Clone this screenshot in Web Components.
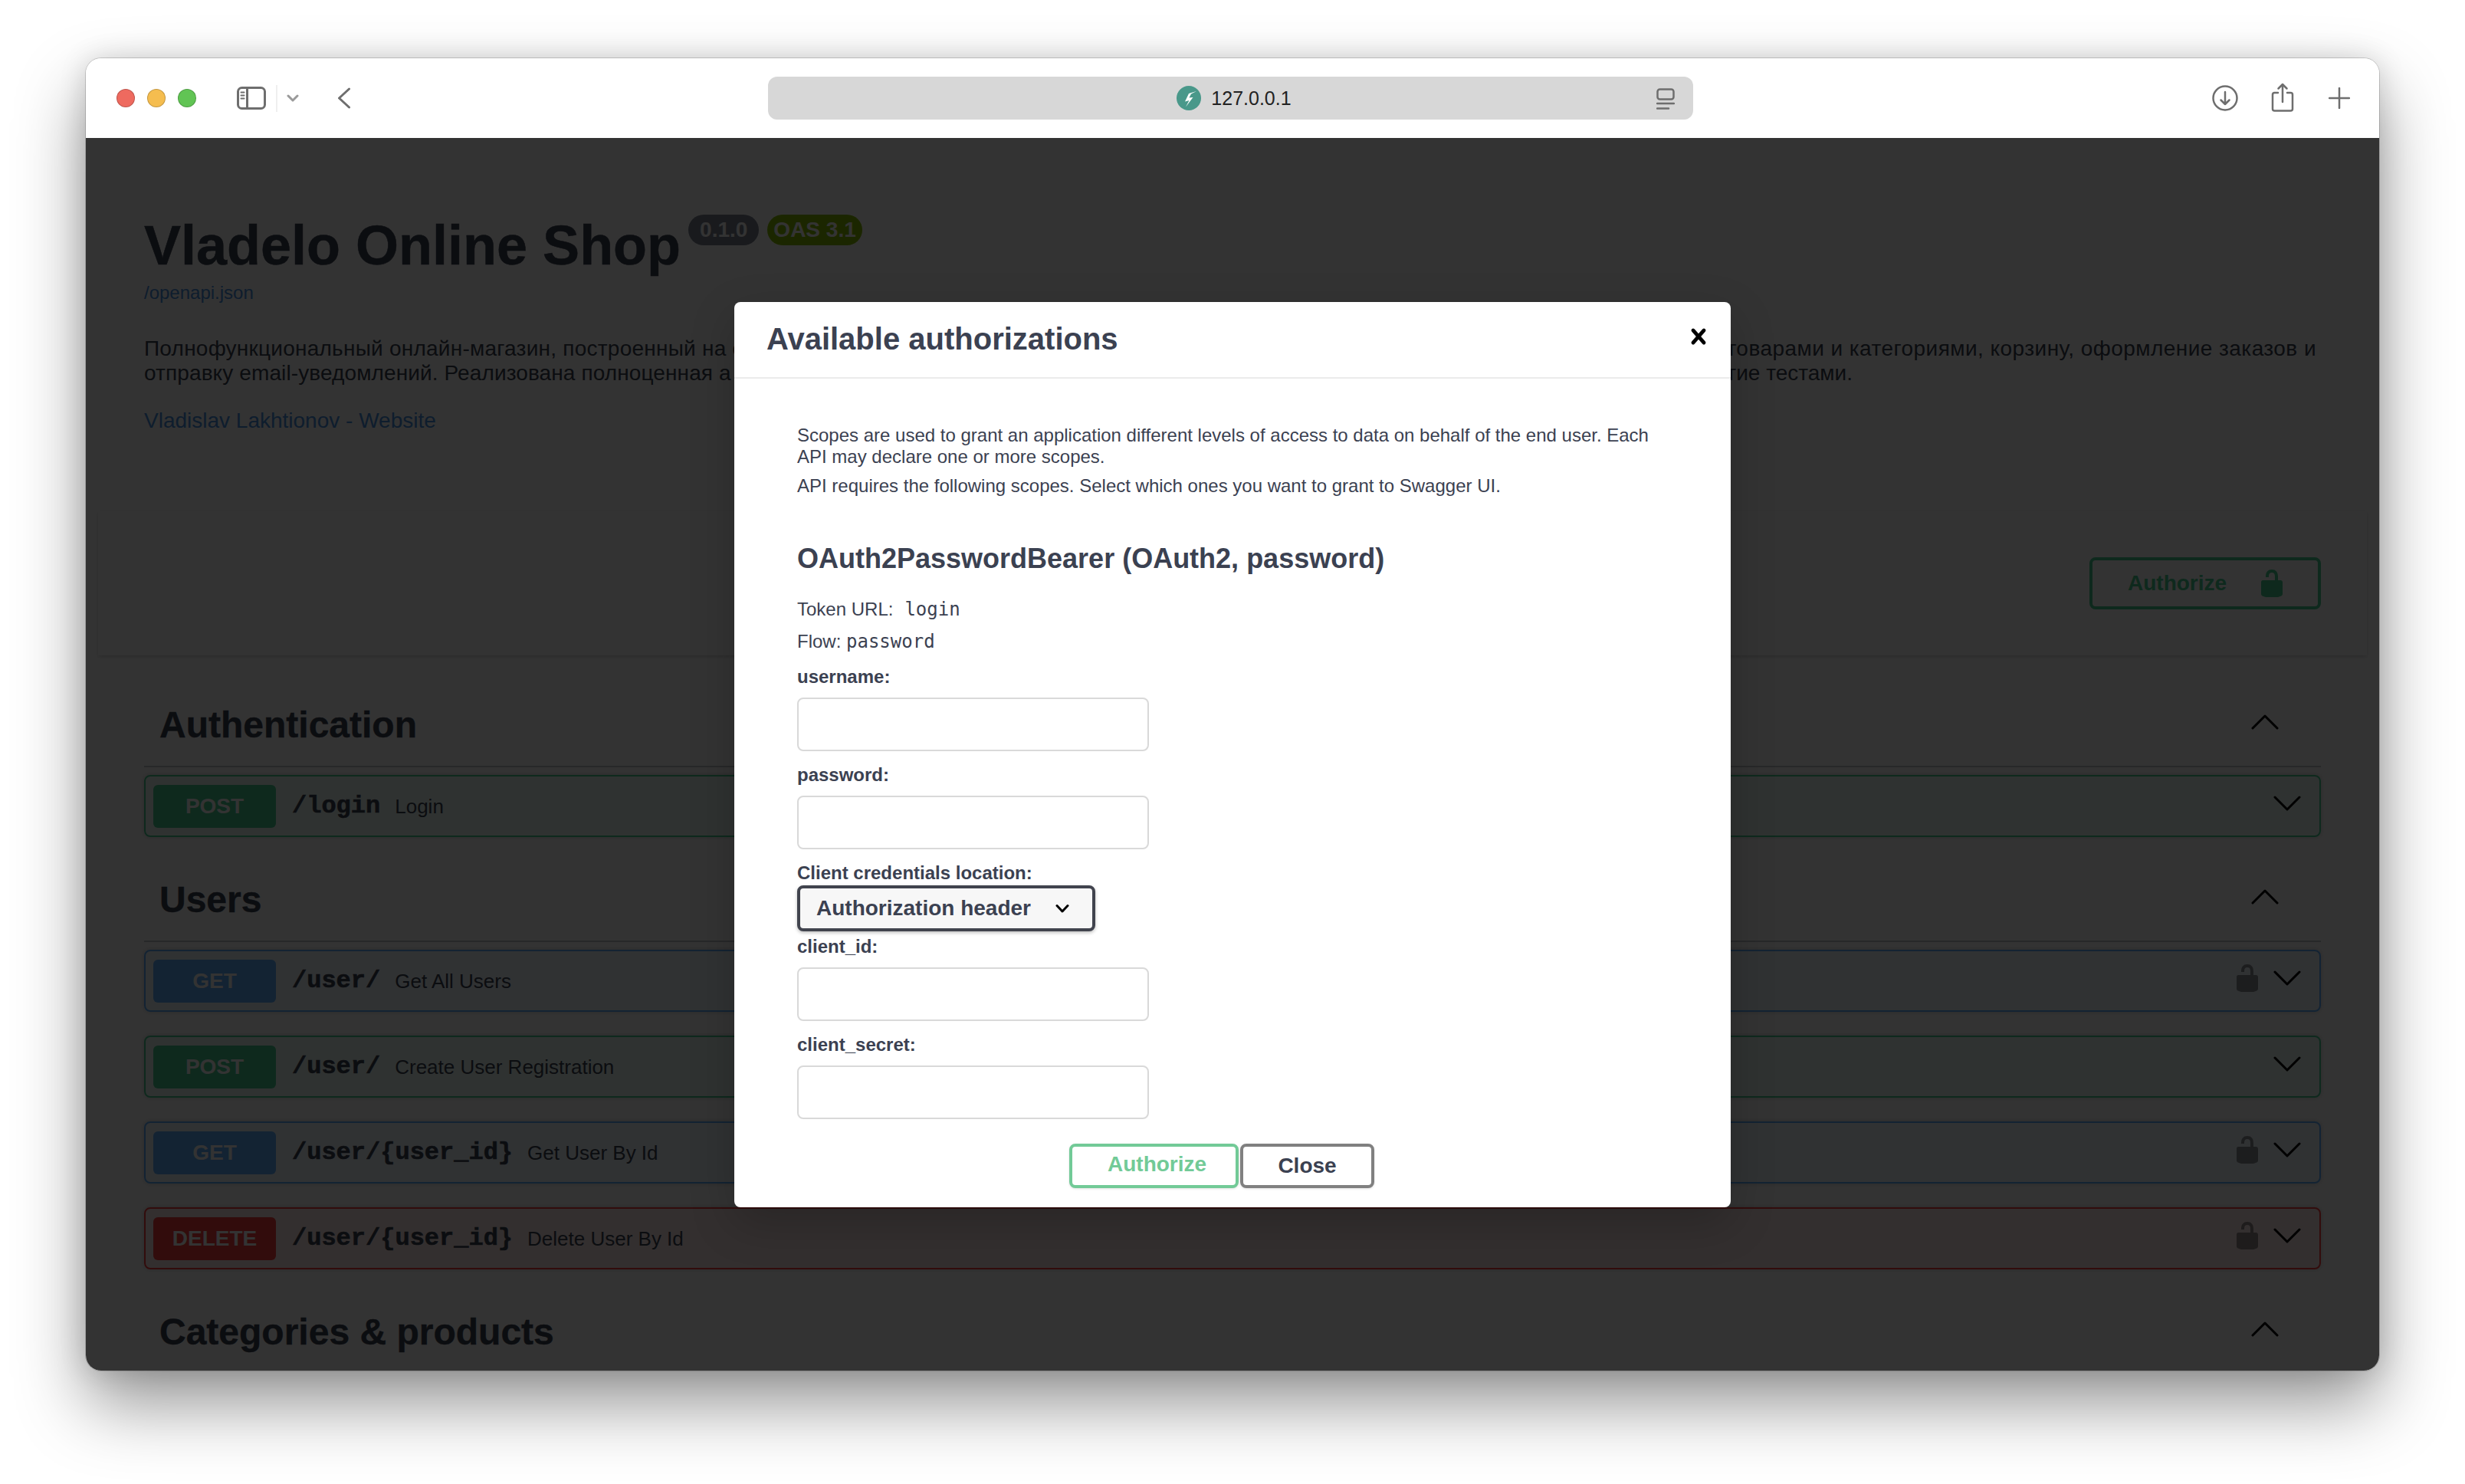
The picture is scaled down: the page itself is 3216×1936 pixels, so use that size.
<!DOCTYPE html>
<html lang="ru">
<head>
<meta charset="utf-8">
<title>Vladelo Online Shop</title>
<style>
  html, body { margin: 0; height: 100%; background: #fff; }
  body { font-family: "Liberation Sans", Arial, sans-serif; }
  desk-top { height: 100%; }
</style>
</head>
<body>
<template id="t-desk">
  <style>
    :host { display: flex; box-sizing: border-box; padding: 76px 112px 148px; background: #fff; overflow: hidden; }
  </style>
  <slot></slot>
</template>

<template id="t-window">
  <style>
    :host { display: flex; flex: 1; flex-direction: column; min-width: 0; border-radius: 20px;
      box-shadow: 0 44px 90px rgba(0,0,0,.42), 0 0 0 1px rgba(0,0,0,.16), 0 0 36px rgba(0,0,0,.14); background: #fff; }
    .clip { display: flex; flex-direction: column; flex: 1; min-height: 0; border-radius: 20px; overflow: hidden; }
    .content { flex: 1; position: relative; overflow: hidden; min-height: 0; background: #fff; }
  </style>
  <div class="clip">
    <slot name="toolbar"></slot>
    <div class="content"><slot></slot></div>
  </div>
</template>

<template id="t-toolbar">
  <style>
    :host { display: flex; align-items: center; height: 104px; flex: none; background: #fff; padding: 0 38px 0 40px; box-sizing: border-box; font-family: "Liberation Sans", Arial, sans-serif; }
    .left { display: flex; align-items: center; width: 850px; flex: none; }
    .dot { width: 24px; height: 24px; border-radius: 50%; box-sizing: border-box; margin-right: 16px; border: 1px solid rgba(0,0,0,.2); }
    .r { background: #ee6a5f; } .y { background: #f5bd4f; } .g { background: #61c454; }
    svg { display: block; fill: none; stroke: #6e6e6e; stroke-width: 3; stroke-linecap: round; stroke-linejoin: round; flex: none; }
    .side { margin-left: 37px; }
    .sep { width: 2px; height: 35px; background: #efefef; margin: 0 12px 0 13px; }
    .drop { stroke: #9a9a9a; }
    .back { margin-left: 50px; }
    .url { width: 1207px; height: 56px; flex: none; background: #d7d7d7; border-radius: 12px; display: flex; align-items: center; justify-content: center; position: relative; gap: 13px; font-size: 25px; color: #222; padding-left: 9px; box-sizing: border-box; }
    .fav { stroke: none; }
    .reader { position: absolute; right: 24px; top: 15px; stroke-width: 2.5; }
    .right { flex: 1; display: flex; align-items: center; justify-content: flex-end; gap: 43px; }
    .right .dl { stroke-width: 2.5; }
    .right .sh { stroke-width: 2.5; margin-top: -2px; }
    .right .pl { stroke-width: 2.5; margin-left: 2px; }
  </style>
  <div class="left">
    <span class="dot r"></span><span class="dot y"></span><span class="dot g"></span>
    <svg class="side" width="38" height="30" viewBox="0 0 38 30"><rect x="1.5" y="1.5" width="35" height="27" rx="5"/><path d="M13.5 2v26"/><path d="M5.5 7.5h4M5.5 11.5h4M5.5 15.5h4" stroke-width="2"/></svg>
    <span class="sep"></span>
    <svg class="drop" width="16" height="10" viewBox="0 0 16 10"><path d="M2 2l6 6 6-6"/></svg>
    <svg class="back" width="18" height="28" viewBox="0 0 18 28"><path d="M15.5 2L2.5 14l13 12"/></svg>
  </div>
  <div class="url">
    <svg class="fav" width="32" height="32" viewBox="0 0 32 32"><circle cx="16" cy="16" r="16" fill="#49988a"/><path d="M26 7L16 10 11 20.5 16.5 19 12 27.5 21.5 15 16.5 15.5 19 10.5Z" fill="#fff"/></svg>
    <span>127.0.0.1</span>
    <svg class="reader" width="24" height="28" viewBox="0 0 24 28"><rect x="1.5" y="1.5" width="21" height="13" rx="3"/><path d="M1 20h22M1 26.500h15"/></svg>
  </div>
  <div class="right">
    <svg class="dl" width="34" height="34" viewBox="0 0 34 34"><circle cx="17" cy="17" r="15.500"/><path d="M17 9v16M11.500 19.500L17 25l5.500-5.500"/></svg>
    <svg class="sh" width="30" height="38" viewBox="0 0 30 38"><path d="M9 13H4a2.500 2.500 0 0 0-2 2.500v18.500a2.500 2.500 0 0 0 2.500 2.500h21a2.500 2.500 0 0 0 2.500-2.500V15.500A2.500 2.500 0 0 0 25.500 13H21"/><path d="M15 25V2M9.500 7.500L15 2l5.500 5.500"/></svg>
    <svg class="pl" width="28" height="28" viewBox="0 0 28 28"><path d="M14 1v26M1 14h26"/></svg>
  </div>
</template>

<template id="t-docs">
  <style>
    :host { display: block; padding: 0 76px; color: #3b4151; font-family: "Liberation Sans", Arial, sans-serif; background: #fff; }
  </style>
  <slot></slot>
</template>

<template id="t-info">
  <style>
    :host { display: block; padding-top: 96px; }
    .title { display: flex; align-items: flex-start; }
    h2 { margin: 0; font-size: 72px; line-height: 88px; font-weight: 700; color: #3b4151; -webkit-text-stroke: .5px #3b4151; }
    .badge { margin: 4px 0 0 10px; height: 40px; padding: 0 15px; border-radius: 21px; color: #fff; font-size: 28px; font-weight: 700; line-height: 40px; background: #7d8492; }
    .oas { background: #89bf04; margin-left: 11px; padding: 0 8px; }
    .url { display: block; margin-top: 4px; font-size: 24px; line-height: 28px; color: #4990e2; }
    .desc { margin-top: 43px; font-size: 28px; line-height: 32px; color: #3b4151; }
    .l { display: flex; justify-content: space-between; white-space: nowrap; }
    .l1 { width: 2834px; } .l2 { width: 2229px; }
    .l1 span:first-child { letter-spacing: .24px; }
    .l1 span:last-child { letter-spacing: .45px; }
    .l2 span:first-child { letter-spacing: .11px; }
    .contact { margin-top: 30px; font-size: 28px; line-height: 32px; color: #4990e2; }
  </style>
  <div class="title"><h2><slot name="title"></slot></h2><span class="badge">0.1.0</span><span class="badge oas">OAS 3.1</span></div>
  <span class="url">/openapi.json</span>
  <div class="desc">
    <div class="l l1"><span>Полнофункциональный онлайн-магазин, построенный на с</span><span>товарами и категориями, корзину, оформление заказов и</span></div>
    <div class="l l2"><span>отправку email-уведомлений. Реализована полноценная а</span><span>тие тестами.</span></div>
  </div>
  <div class="contact">Vladislav Lakhtionov - Website</div>
</template>

<template id="t-scheme">
  <style>
    :host { display: flex; justify-content: flex-end; margin: 102px -60px 0; padding: 60px; background: #fff; box-shadow: 0 2px 4px rgba(0,0,0,.15); }
    .btn { display: flex; align-items: center; height: 68px; box-sizing: border-box; width: 302px; border: 4px solid #49cc90; border-radius: 8px; padding-left: 46px; font-size: 28px; font-weight: 700; color: #49cc90; background: #fff; }
    svg { display: block; margin-left: 39px; fill: #49cc90; }
  </style>
  <div class="btn"><span>Authorize</span>
    <svg width="40" height="40" viewBox="0 0 20 20"><path d="M15.800 8H14V5.600C14 2.703 12.665 1 10 1 7.334 1 6 2.703 6 5.600V6h2v-.801C8 3.754 8.797 3 10 3c1.203 0 2 .754 2 2.199V8H4c-.553 0-1 .646-1 1.199V17c0 .549.428 1.139.951 1.307l1.197.387C5.672 18.861 6.550 19 7.100 19h5.800c.549 0 1.428-.139 1.951-.307l1.196-.387c.524-.167.953-.757.953-1.306V9.199C17 8.646 16.352 8 15.800 8z"/></svg>
  </div>
</template>

<template id="t-tag">
  <style>
    :host { display: block; }
    :host(:first-of-type) { margin-top: 40px; }
    .head { display: flex; align-items: center; justify-content: space-between; height: 106px; box-sizing: border-box; border-bottom: 2px solid rgba(59,65,81,.3); padding: 0 55px 0 20px; margin-bottom: 10px; }
    h3 { margin: 0 0 2px; font-size: 48px; font-weight: 700; line-height: 56px; color: #3b4151; -webkit-text-stroke: .4px #3b4151; }
    svg { display: block; margin-bottom: 10px; fill: none; stroke: #000; stroke-width: 3; stroke-linecap: round; stroke-linejoin: round; }
  </style>
  <div class="head"><h3><slot name="name"></slot></h3>
    <svg width="36" height="20" viewBox="0 0 36 20"><path d="M2 18L18 2l16 16"/></svg>
  </div>
  <slot></slot>
</template>

<template id="t-op">
  <style>
    :host { display: flex; align-items: center; height: 81px; box-sizing: border-box; margin-bottom: 31px; padding: 0 24px 0 10px; border: 2px solid rgb(var(--c)); border-radius: 8px; background: rgba(var(--c), .1); box-shadow: 0 0 6px rgba(0,0,0,.19); color: #3b4151; }
    :host([method="get"]) { --c: 97,175,254; }
    :host([method="post"]) { --c: 73,204,144; }
    :host([method="delete"]) { --c: 249,62,62; }
    .m { width: 160px; height: 56px; flex: none; display: flex; align-items: center; justify-content: center; border-radius: 6px; background: rgb(var(--c)); color: #fff; font-size: 28px; font-weight: 700; }
    .p { margin-left: 21px; font: 700 32px/40px "Liberation Mono", monospace; -webkit-text-stroke: .6px #3b4151; white-space: nowrap; }
    .s { margin-left: 19px; flex: 1; font-size: 26px; line-height: 32px; white-space: nowrap; }
    svg { display: block; flex: none; margin-bottom: 7px; }
    .lock { fill: #000; opacity: .4; margin-right: 14px; }
    .ch { fill: none; stroke: #000; stroke-width: 3; stroke-linecap: round; stroke-linejoin: round; }
  </style>
  <span class="m"></span><span class="p"></span><span class="s"></span>
  <svg class="lock" width="40" height="40" viewBox="0 0 20 20"><path d="M15.800 8H14V5.600C14 2.703 12.665 1 10 1 7.334 1 6 2.703 6 5.600V6h2v-.801C8 3.754 8.797 3 10 3c1.203 0 2 .754 2 2.199V8H4c-.553 0-1 .646-1 1.199V17c0 .549.428 1.139.951 1.307l1.197.387C5.672 18.861 6.550 19 7.100 19h5.800c.549 0 1.428-.139 1.951-.307l1.196-.387c.524-.167.953-.757.953-1.306V9.199C17 8.646 16.352 8 15.800 8z"/></svg>
  <svg class="ch" width="36" height="20" viewBox="0 0 36 20"><path d="M2 2l16 16L34 2"/></svg>
</template>

<template id="t-overlay">
  <style>
    :host { display: block; position: absolute; inset: 0; background: rgba(0,0,0,.8); }
  </style>
  <slot></slot>
</template>

<template id="t-dialog">
  <style>
    :host { display: block; position: absolute; left: 846px; top: 214px; width: 1300px; background: #fff; border-radius: 8px; box-shadow: 0 20px 60px rgba(0,0,0,.2); color: #3b4151; font-family: "Liberation Sans", Arial, sans-serif; }
    header { display: flex; align-items: center; justify-content: space-between; height: 100px; box-sizing: border-box; border-bottom: 2px solid #ebebeb; padding: 0 22px 6px 42px; }
    h3 { margin: 4px 0 0; font-size: 40px; line-height: 48px; font-weight: 700; }
    header svg { display: block; fill: #000; margin-bottom: 2px; }
    .body { padding: 60px 40px 25px 82px; }
    p { margin: 0; font-size: 24px; line-height: 28px; }
    .p1 { width: 1120px; }
    .p2 { margin-top: 10px; }
    h4 { margin: 60px 0 0; font-size: 36px; line-height: 42px; font-weight: 700; }
    .tok { margin-top: 31px; display: flex; }
    .flow { margin-top: 14px; margin-bottom: 18px; }
    code { font: 24px/28px "DejaVu Sans Mono", monospace; }
    .tok code { margin-left: 15px; }
    .btns { display: flex; gap: 2px; margin-top: 32px; padding-left: 355px; }
    .btn { height: 58px; box-sizing: border-box; border-radius: 8px; border: 4px solid; background: #fff; font-size: 28px; font-weight: 700; display: flex; align-items: center; box-shadow: 0 1px 3px rgba(0,0,0,.12); }
    .go { width: 221px; border-color: #72ca97; color: #72ca97; padding: 0 0 4px 46px; }
    .cl { width: 175px; border-color: #808080; color: #3b4151; justify-content: center; }
  </style>
  <header>
    <h3>Available authorizations</h3>
    <svg width="40" height="40" viewBox="0 0 20 20"><path d="M14.348 14.849a1.200 1.200 0 0 1-1.697 0L10 11.819l-2.651 3.029a1.200 1.200 0 1 1-1.697-1.697l2.758-3.150-2.759-3.152a1.200 1.200 0 1 1 1.697-1.697L10 8.183l2.651-3.031a1.200 1.200 0 1 1 1.697 1.697l-2.758 3.152 2.758 3.150a1.200 1.200 0 0 1 0 1.698z"/></svg>
  </header>
  <div class="body">
    <p class="p1">Scopes are used to grant an application different levels of access to data on behalf of the end user. Each API may declare one or more scopes.</p>
    <p class="p2">API requires the following scopes. Select which ones you want to grant to Swagger UI.</p>
    <h4>OAuth2PasswordBearer (OAuth2, password)</h4>
    <p class="tok">Token URL:<code>login</code></p>
    <p class="flow">Flow: <code>password</code></p>
    <slot></slot>
    <div class="btns"><div class="btn go">Authorize</div><div class="btn cl">Close</div></div>
  </div>
</template>

<template id="t-field">
  <style>
    :host { display: block; margin-top: 17px; }
    :host(:first-child) { margin-top: 0; }
    :host(.tight) { margin-top: 6px; }
    label { display: block; font-size: 24px; line-height: 28px; font-weight: 700; color: #3b4151; }
    input { display: block; box-sizing: border-box; width: 459px; height: 70px; margin: 13px 0 0; padding: 0 16px; background: #fff; border: 2px solid #d9d9d9; border-radius: 8px; outline: none; }
  </style>
  <label><slot></slot></label>
  <input type="text" aria-label="field">
</template>

<template id="t-select">
  <style>
    :host { display: block; margin-top: 17px; }
    label { display: block; font-size: 24px; line-height: 28px; font-weight: 700; color: #3b4151; }
    .sel { display: flex; align-items: center; justify-content: space-between; box-sizing: border-box; width: 389px; height: 60px; margin-top: 2px; padding: 0 30px 0 21px; border: 4px solid #41444e; border-radius: 8px; background: #f7f7f7; box-shadow: 0 2px 4px rgba(0,0,0,.25); font-size: 28px; font-weight: 700; color: #3b4151; }
    svg { display: block; fill: none; stroke: #000; stroke-width: 3; stroke-linecap: round; stroke-linejoin: round; }
  </style>
  <label><slot></slot></label>
  <div class="sel"><span>Authorization header</span><svg width="18" height="13" viewBox="0 0 18 13"><path d="M2 2.500l7 7.500 7-7.500"/></svg></div>
</template>

<desk-top>
  <mac-window>
    <safari-toolbar slot="toolbar"></safari-toolbar>
    <swagger-docs>
      <docs-info><span slot="title">Vladelo Online Shop</span></docs-info>
      <scheme-bar></scheme-bar>
      <api-tag>
        <span slot="name">Authentication</span>
        <api-op method="post" path="/login" summary="Login"></api-op>
      </api-tag>
      <api-tag>
        <span slot="name">Users</span>
        <api-op method="get" path="/user/" summary="Get All Users" locked></api-op>
        <api-op method="post" path="/user/" summary="Create User Registration"></api-op>
        <api-op method="get" path="/user/{user_id}" summary="Get User By Id" locked></api-op>
        <api-op method="delete" path="/user/{user_id}" summary="Delete User By Id" locked></api-op>
      </api-tag>
      <api-tag>
        <span slot="name">Categories &amp; products</span>
      </api-tag>
    </swagger-docs>
    <modal-overlay>
      <auth-dialog>
        <auth-field>username:</auth-field>
        <auth-field>password:</auth-field>
        <auth-select>Client credentials location:</auth-select>
        <auth-field class="tight">client_id:</auth-field>
        <auth-field>client_secret:</auth-field>
      </auth-dialog>
    </modal-overlay>
  </mac-window>
</desk-top>

<script>
  function base(id, setup) {
    return class extends HTMLElement {
      constructor() {
        super();
        const root = this.attachShadow({ mode: 'open' });
        root.appendChild(document.getElementById(id).content.cloneNode(true));
      }
      connectedCallback() { if (setup) setup(this, this.shadowRoot); }
    };
  }
  customElements.define('desk-top', base('t-desk'));
  customElements.define('mac-window', base('t-window'));
  customElements.define('safari-toolbar', base('t-toolbar'));
  customElements.define('swagger-docs', base('t-docs'));
  customElements.define('docs-info', base('t-info'));
  customElements.define('scheme-bar', base('t-scheme'));
  customElements.define('api-tag', base('t-tag'));
  customElements.define('api-op', base('t-op', (el, root) => {
    root.querySelector('.m').textContent = el.getAttribute('method').toUpperCase();
    root.querySelector('.p').textContent = el.getAttribute('path');
    root.querySelector('.s').textContent = el.getAttribute('summary');
    if (!el.hasAttribute('locked')) root.querySelector('.lock').style.display = 'none';
  }));
  customElements.define('modal-overlay', base('t-overlay'));
  customElements.define('auth-dialog', base('t-dialog'));
  customElements.define('auth-field', base('t-field'));
  customElements.define('auth-select', base('t-select'));
</script>
</body>
</html>
